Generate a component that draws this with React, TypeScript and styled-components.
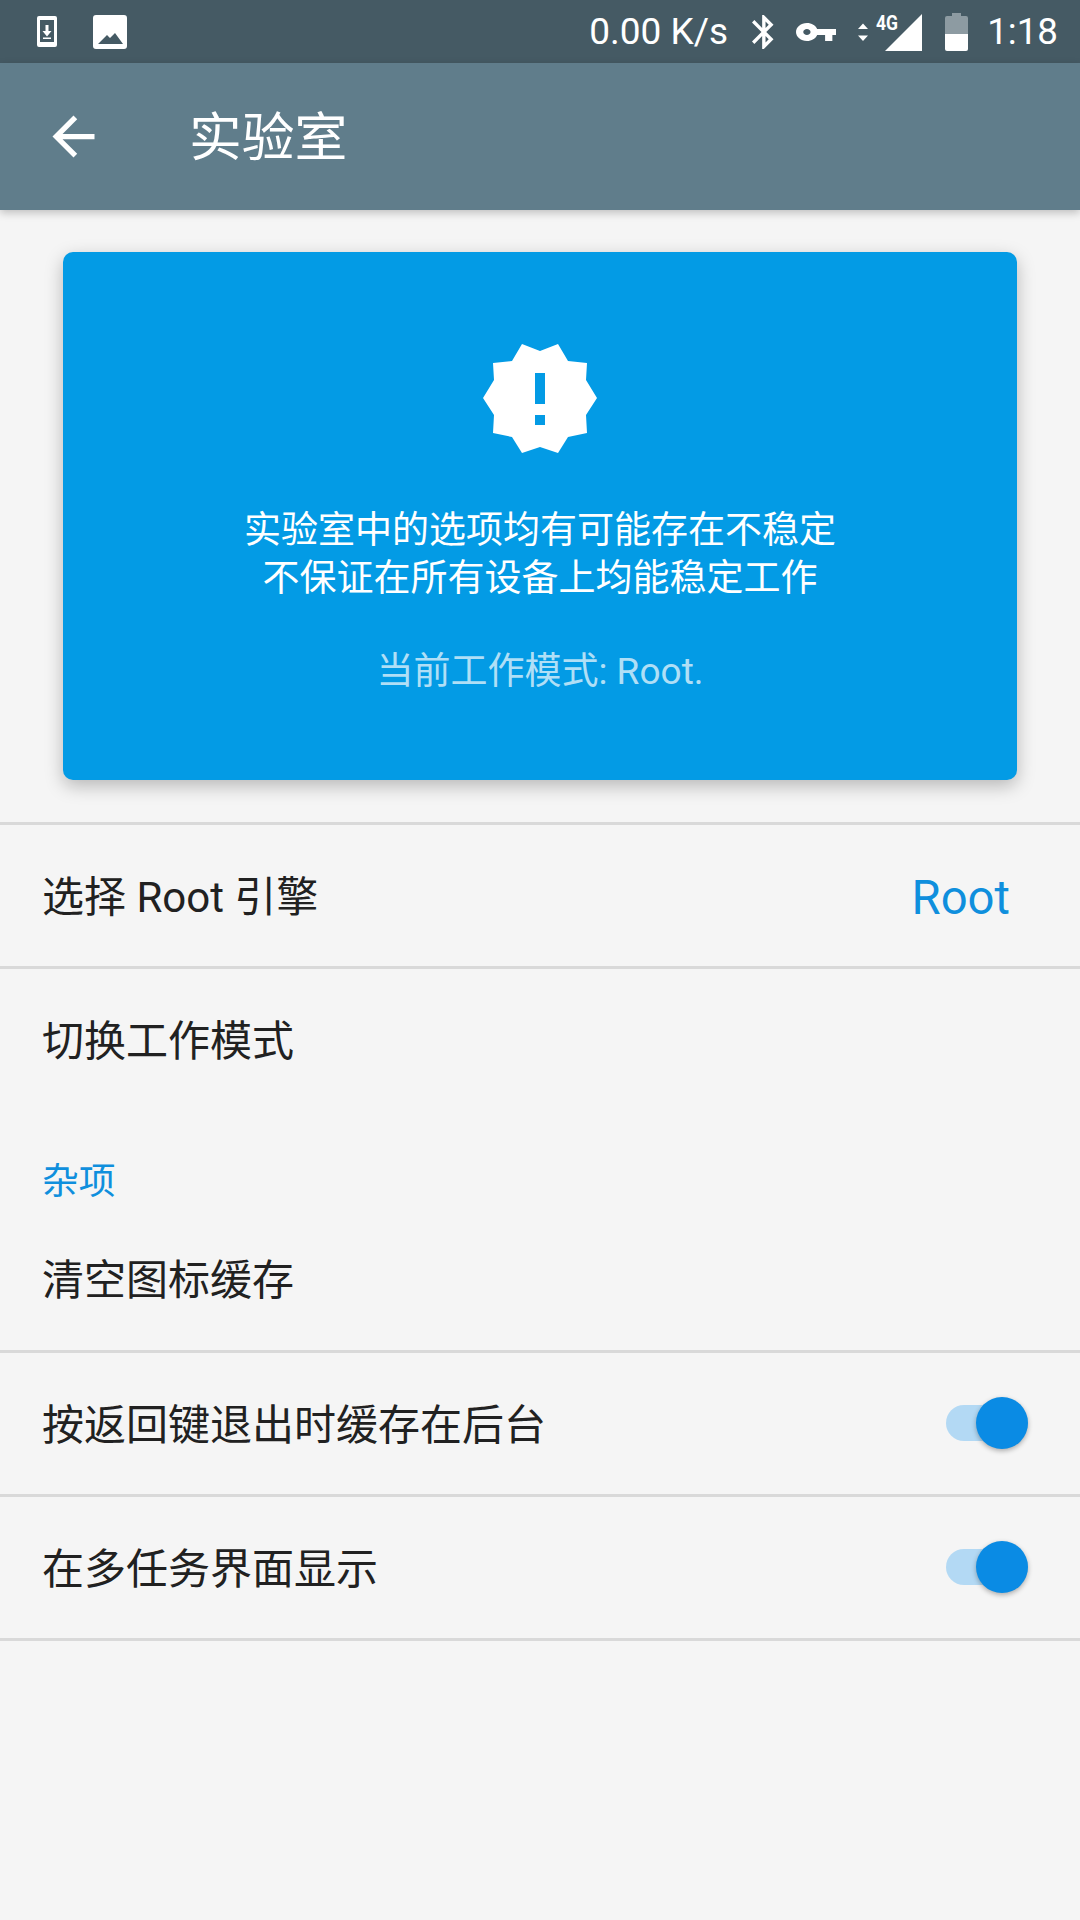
import React from 'react';
import styled, { createGlobalStyle } from 'styled-components';

const GlobalStyle = createGlobalStyle`
  html, body {
    margin: 0;
    padding: 0;
    background: #f5f5f5;
  }
  * {
    box-sizing: border-box;
  }
`;

const Page = styled.div`
  width: 1080px;
  height: 1920px;
  overflow: hidden;
  background: #f5f5f5;
  font-family: Roboto, "Noto Sans CJK SC", sans-serif;
  color: #212121;
`;

const StatusBar = styled.div`
  height: 63px;
  background: #455a64;
  display: flex;
  align-items: center;
  padding: 0 22px 0 37px;
  color: #fff;
`;

const StatusLeft = styled.div`
  display: flex;
  align-items: center;
  gap: 36px;
  flex: 1;
`;

const StatusRight = styled.div`
  display: flex;
  align-items: center;
`;

const Speed = styled.span`
  font-size: 37px;
  margin-right: 24px;
`;

const Clock = styled.span`
  font-size: 36.75px;
  margin-left: 19px;
`;

const StatusIcon = styled.svg<{ $gap?: number }>`
  display: block;
  flex: none;
  margin-right: ${p => p.$gap ?? 0}px;
`;

const Toolbar = styled.div`
  height: 147px;
  background: #607d8b;
  display: flex;
  align-items: center;
  padding-left: 42px;
  box-shadow: 0 3px 8px rgba(0, 0, 0, 0.22);
  position: relative;
`;

const BackIcon = styled.svg`
  width: 63px;
  height: 63px;
  fill: #fff;
  margin-right: 84px;
`;

const Title = styled.div`
  font-size: 52.8px;
  color: #fff;
  padding-bottom: 7px;
`;

const Card = styled.div`
  margin: 42px 63px 42px;
  height: 528px;
  background: #039be5;
  border-radius: 10px;
  box-shadow: 0 6px 18px rgba(0, 0, 0, 0.25);
  display: flex;
  flex-direction: column;
  align-items: center;
  padding-top: 92px;
  color: #fff;
`;

const Badge = styled.svg`
  width: 116px;
  height: 112px;
  margin-bottom: 51px;
`;

const CardText = styled.div`
  font-size: 37px;
  line-height: 48px;
  text-align: center;
`;

const CardMode = styled.div`
  font-size: 37px;
  line-height: 48px;
  margin-top: 45px;
  color: rgba(255, 255, 255, 0.7);
`;

const Row = styled.div<{ $divider?: boolean }>`
  height: 144px;
  display: flex;
  align-items: center;
  justify-content: space-between;
  padding: 0 52px 4px 42px;
  font-size: 42px;
  border-top: ${p => (p.$divider ? '3px solid #d9d9d9' : 'none')};
`;

const Value = styled.span`
  font-size: 47.25px;
  color: #0f8fdd;
  margin: 8px 18px 0 0;
`;

const SectionTitle = styled.div`
  font-size: 36.75px;
  color: #0f8fdd;
  padding: 48px 42px 0;
  height: 96px;
  line-height: 48px;
`;

const Switch = styled.div`
  position: relative;
  width: 82px;
  height: 36px;
  margin-top: 3px;
  border-radius: 18px;
  background: #b3d9f4;
`;

const Thumb = styled.div`
  position: absolute;
  right: 0;
  top: -8px;
  width: 52px;
  height: 52px;
  border-radius: 50%;
  background: #0a8be4;
  box-shadow: 0 2px 5px rgba(0, 0, 0, 0.3);
`;

const App: React.FC = () => (
  <Page>
    <GlobalStyle />
    <StatusBar>
      <StatusLeft>
        <StatusIcon width="20" height="31" viewBox="0 0 20 31">
          <path
            fillRule="evenodd"
            fill="#fff"
            d="M2 0h16a2 2 0 0 1 2 2v27a2 2 0 0 1-2 2H2a2 2 0 0 1-2-2V2a2 2 0 0 1 2-2zM3 4v22h14V4zM8.5 9h3v6h3L10 20.5 5.5 15h3zM6 21.5h8V23H6z"
          />
        </StatusIcon>
        <StatusIcon width="34" height="34" viewBox="0 0 34 34">
          <path
            fillRule="evenodd"
            fill="#fff"
            d="M3 0h28a3 3 0 0 1 3 3v28a3 3 0 0 1-3 3H3a3 3 0 0 1-3-3V3a3 3 0 0 1 3-3zM5 29l9-9 3 3 5-5 8 11z"
          />
        </StatusIcon>
      </StatusLeft>
      <StatusRight>
        <Speed>0.00 K/s</Speed>
        <StatusIcon width="22" height="34" viewBox="5 2 13 20" preserveAspectRatio="none" fill="#fff" $gap={22}>
          <path d="M17.71 7.71L12 2h-1v7.59L6.41 5 5 6.41 10.59 12 5 17.59 6.41 19 11 14.41V22h1l5.71-5.71-4.3-4.29 4.3-4.29zM13 5.83l1.88 1.88L13 9.59V5.83zm1.88 10.46L13 18.17v-3.76l1.88 1.88z" />
        </StatusIcon>
        <StatusIcon width="40" height="18" viewBox="1 6 22 12" preserveAspectRatio="none" fill="#fff" $gap={21}>
          <path d="M12.65 10C11.83 7.67 9.61 6 7 6c-3.31 0-6 2.69-6 6s2.69 6 6 6c2.61 0 4.83-1.67 5.65-4H17v4h4v-4h2v-4H12.65zM7 14c-1.1 0-2-.9-2-2s.9-2 2-2 2 .9 2 2-.9 2-2 2z" />
        </StatusIcon>
        <StatusIcon width="66" height="40" viewBox="0 0 66 40" fill="#fff" $gap={22}>
          <path d="M6 11.5l5 5.5H1zM1 23.5h10l-5 5.5z" />
          <text
            x="19"
            y="18"
            fontSize="20"
            fontWeight="700"
            fontFamily="Roboto, sans-serif"
            textLength="22"
            lengthAdjust="spacingAndGlyphs"
          >
            4G
          </text>
          <path d="M28 39L65 2v37z" />
        </StatusIcon>
        <StatusIcon width="23" height="38" viewBox="0 0 23 38" $gap={0}>
          <path fill="#8d9ba2" d="M7 0h9v3h5a2 2 0 0 1 2 2v16H0V5a2 2 0 0 1 2-2h5z" />
          <path fill="#fff" d="M0 21h23v15a2 2 0 0 1-2 2H2a2 2 0 0 1-2-2z" />
        </StatusIcon>
        <Clock>1:18</Clock>
      </StatusRight>
    </StatusBar>
    <Toolbar>
      <BackIcon viewBox="0 0 24 24">
        <path d="M20 11H7.83l5.59-5.59L12 4l-8 8 8 8 1.41-1.41L7.83 13H20v-2z" />
      </BackIcon>
      <Title>实验室</Title>
    </Toolbar>
    <Card>
      <Badge viewBox="42 24 116 112">
        <path
          fill="#fff"
          d="M82 24L100 31 118 24 128 41 147 43 146 60 157 78 146 95 147 113 128 117 118 133 100 127 82 133 72 117 53 113 54 95 43 78 54 60 53 43 72 41z"
        />
        <path fill="#039be5" d="M95 53h10v31H95zM95 95h10v10H95z" />
      </Badge>
      <CardText>
        实验室中的选项均有可能存在不稳定
        <br />
        不保证在所有设备上均能稳定工作
      </CardText>
      <CardMode>当前工作模式: Root.</CardMode>
    </Card>
    <Row $divider>
      <span>选择 Root 引擎</span>
      <Value>Root</Value>
    </Row>
    <Row $divider>
      <span>切换工作模式</span>
    </Row>
    <SectionTitle>杂项</SectionTitle>
    <Row>
      <span>清空图标缓存</span>
    </Row>
    <Row $divider>
      <span>按返回键退出时缓存在后台</span>
      <Switch>
        <Thumb />
      </Switch>
    </Row>
    <Row $divider>
      <span>在多任务界面显示</span>
      <Switch>
        <Thumb />
      </Switch>
    </Row>
    <Row $divider />
  </Page>
);

export default App;
